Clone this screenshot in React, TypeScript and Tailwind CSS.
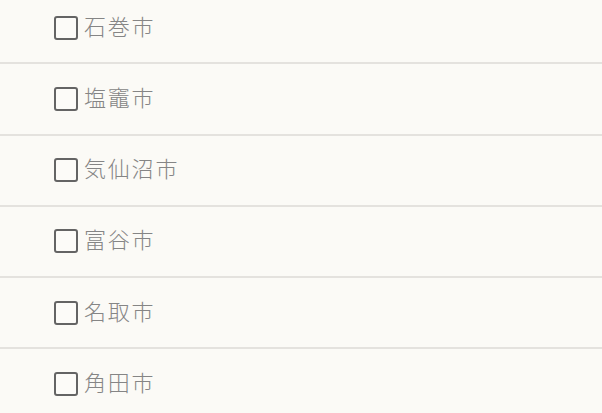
const cities = ['石巻市', '塩竈市', '気仙沼市', '富谷市', '名取市', '角田市']

function CityRow({ name }: { name: string }) {
  return (
    <label className="flex h-[71.25px] items-center gap-[6px] border-b-2 border-[#e4e2de] pl-[54px]">
      <span className="block h-[24px] w-[24px] shrink-0 rounded-[3px] border-2 border-[#646464] bg-[#fcfbf8]" />
      <span className="mb-[6px] text-[22px] font-light leading-none tracking-[1.8px] text-[#858585]">{name}</span>
    </label>
  )
}

export default function App() {
  return (
    <div
      className="h-[413px] w-full overflow-hidden bg-[#fbfaf6]"
      style={{ fontFamily: '"Noto Sans CJK JP", "Noto Sans", sans-serif' }}
    >
      <div className="-mt-[7px]">
        {cities.map((c) => (
          <CityRow key={c} name={c} />
        ))}
      </div>
    </div>
  )
}
